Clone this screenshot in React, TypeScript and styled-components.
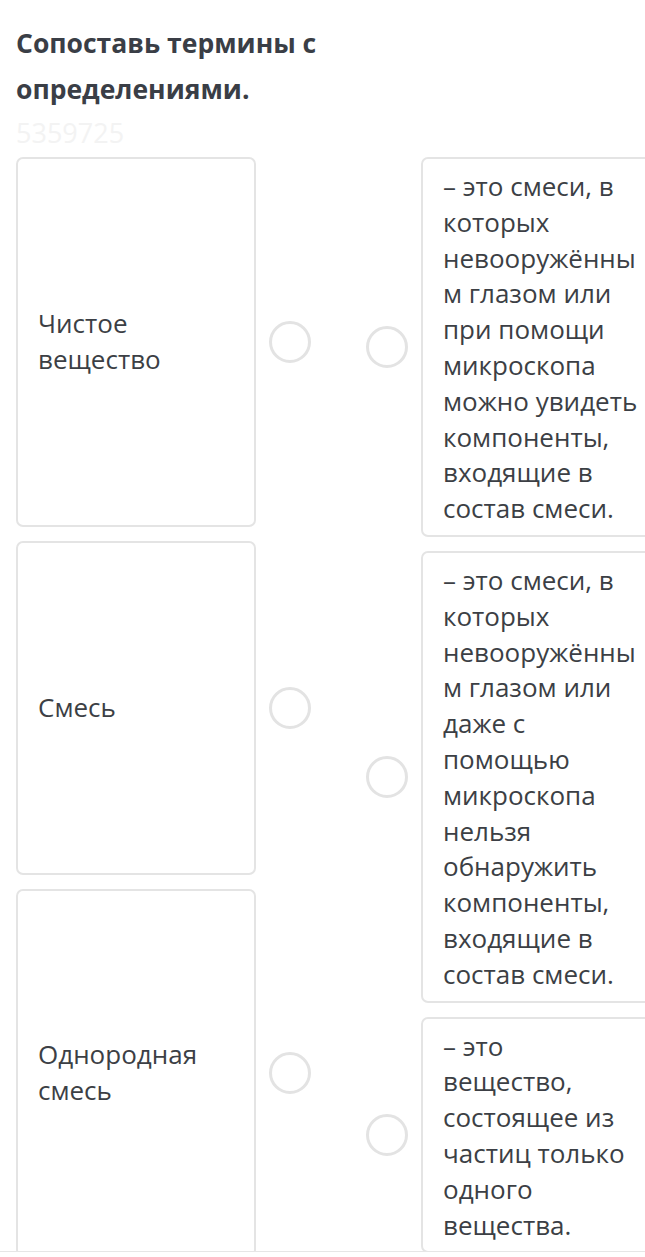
import styled, { createGlobalStyle } from 'styled-components';

const GlobalStyle = createGlobalStyle`
	html, body {
		margin: 0;
		padding: 0;
		background: #ffffff;
		overflow: hidden;
	}
	body {
		font-family: "Open Sans", "Liberation Sans", sans-serif;
		color: #3c3f45;
	}
`;

const terms = [
	{ text: 'Чистое вещество', height: 370 },
	{ text: 'Смесь', height: 334 },
	{ text: 'Однородная смесь', height: 368 },
];

// lines are kept as in the app, which wraps the long word mid-way
const definitions = [
	[
		'– это смеси, в',
		'которых',
		'невооружённы',
		'м глазом или',
		'при помощи',
		'микроскопа',
		'можно увидеть',
		'компоненты,',
		'входящие в',
		'состав смеси.',
	],
	[
		'– это смеси, в',
		'которых',
		'невооружённы',
		'м глазом или',
		'даже с',
		'помощью',
		'микроскопа',
		'нельзя',
		'обнаружить',
		'компоненты,',
		'входящие в',
		'состав смеси.',
	],
	['– это', 'вещество,', 'состоящее из', 'частиц только', 'одного', 'вещества.'],
];

const App = () => {
	return (
		<>
			<GlobalStyle />
			<Page>
				<Title>Сопоставь термины с определениями.</Title>
				<TaskId>5359725</TaskId>
				<Board>
					<Column>
						{terms.map((t) => (
							<TermRow key={t.text}>
								<TermCard $height={t.height}>
									<span>{t.text}</span>
								</TermCard>
								<Dot />
							</TermRow>
						))}
					</Column>
					<Column>
						{definitions.map((lines, i) => (
							<DefRow key={i}>
								<Dot />
								<DefCard>
									{lines.map((l, j) => (
										<Line key={j}>{l}</Line>
									))}
								</DefCard>
							</DefRow>
						))}
					</Column>
				</Board>
			</Page>
			<BottomBar />
		</>
	);
};

export default App;

const Page = styled.div`
	padding: 20px 0 0 16px;
	width: 700px;
`;

const Title = styled.h1`
	margin: 0;
	width: 420px;
	font-size: 26.5px;
	line-height: 46px;
	font-weight: 700;
	color: #3a3e46;
`;

const TaskId = styled.div`
	font-size: 27px;
	line-height: 42px;
	color: #f3f3f3;
	margin-bottom: 3px;
`;

const Board = styled.div`
	display: flex;
	gap: 55px;
	align-items: flex-start;
`;

const Column = styled.div`
	display: flex;
	flex-direction: column;
	gap: 14px;
`;

const TermRow = styled.div`
	display: flex;
	align-items: center;
	gap: 13px;
`;

const DefRow = styled(TermRow)``;

const Card = styled.div`
	box-sizing: border-box;
	width: 240px;
	border: 2px solid #e4e4e4;
	border-radius: 7px;
	background: #fff;
	font-size: 26px;
	line-height: 35.8px;
	color: #3c3f45;
`;

const TermCard = styled(Card)<{ $height: number }>`
	height: ${(p) => p.$height}px;
	display: flex;
	align-items: center;
	padding: 0 20px;
`;

const DefCard = styled(Card)`
	width: 244px;
	padding: 10px 20px 8px;
`;

const Line = styled.div`
	white-space: nowrap;
`;

const Dot = styled.div`
	box-sizing: border-box;
	flex: none;
	width: 42px;
	height: 42px;
	border: 3px solid #e3e3e3;
	border-radius: 50%;
`;

const BottomBar = styled.div`
	position: fixed;
	left: 0;
	right: 0;
	bottom: 0;
	height: 5px;
	background: #fff;
	border-top: 1px solid #e6e6e6;
`;
